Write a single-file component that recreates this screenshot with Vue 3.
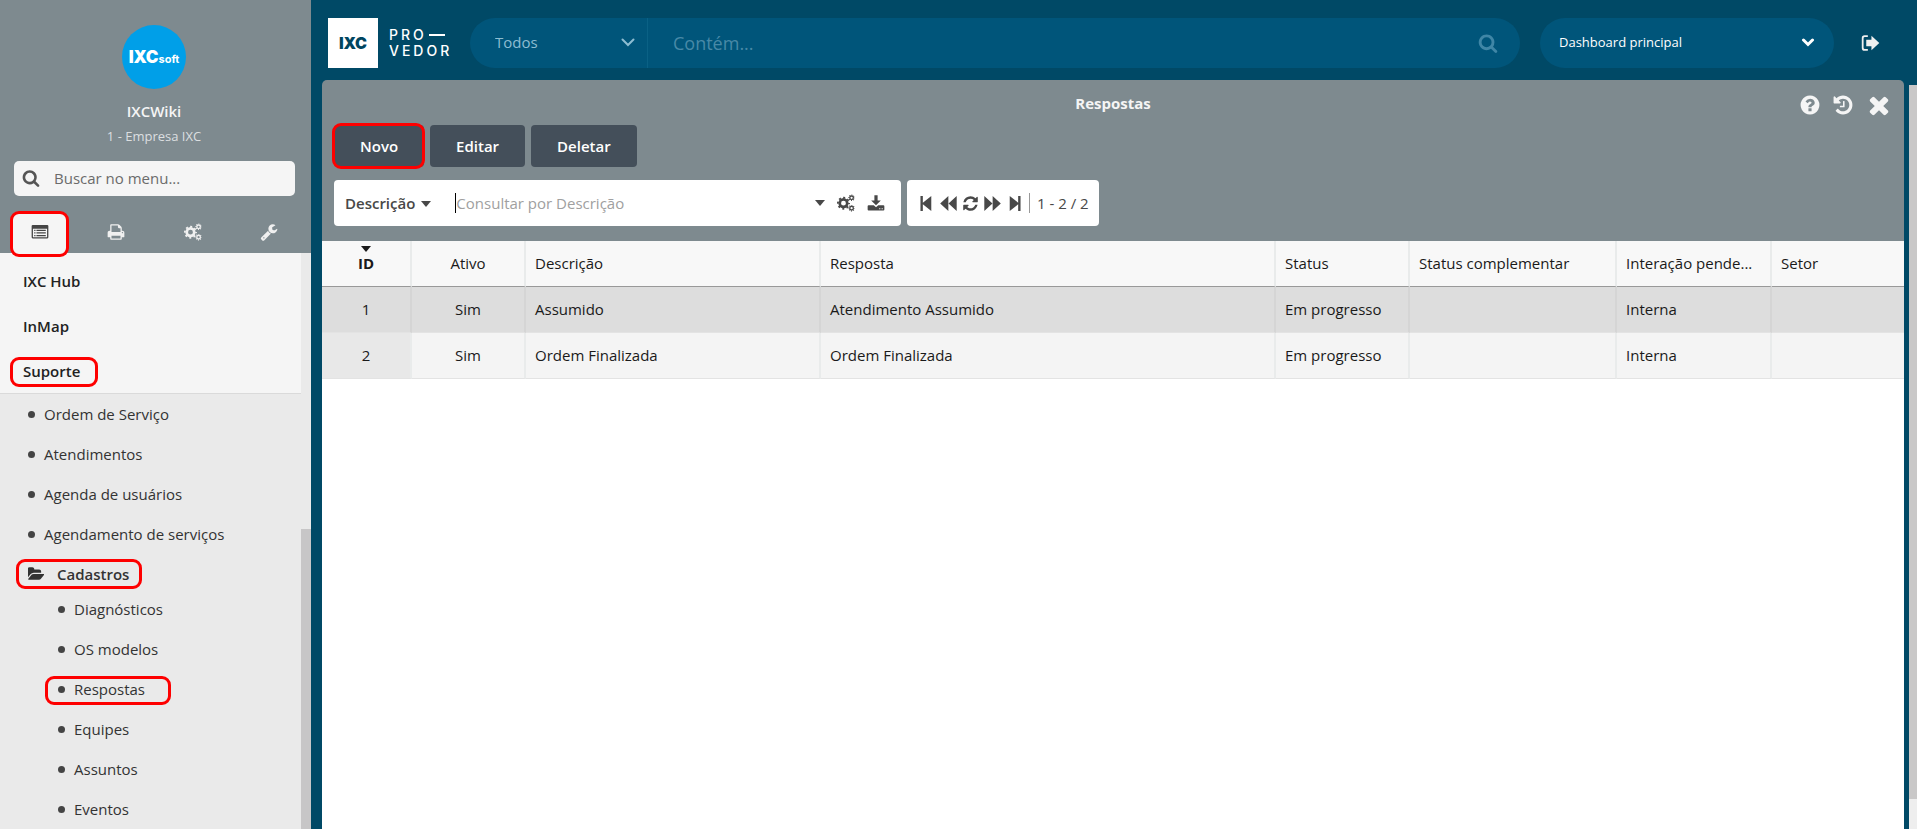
<script setup>
import { h, ref } from 'vue'

const columns = [
  { label: 'ID', cls: 'w-id' },
  { label: 'Ativo', cls: 'w-ativo' },
  { label: 'Descrição', cls: 'w-desc' },
  { label: 'Resposta', cls: 'w-resp' },
  { label: 'Status', cls: 'w-status' },
  { label: 'Status complementar', cls: 'w-compl' },
  { label: 'Interação pende...', cls: 'w-inter' },
  { label: 'Setor', cls: 'w-setor' },
]
const rows = [
  ['1', 'Sim', 'Assumido', 'Atendimento Assumido', 'Em progresso', '', 'Interna', ''],
  ['2', 'Sim', 'Ordem Finalizada', 'Ordem Finalizada', 'Em progresso', '', 'Interna', ''],
]
const selected = ref(0)
const modules = ['IXC Hub', 'InMap', 'Suporte']
const links = ['Ordem de Serviço', 'Atendimentos', 'Agenda de usuários', 'Agendamento de serviços']
const subLinks = ['Diagnósticos', 'OS modelos', 'Respostas', 'Equipes', 'Assuntos', 'Eventos']

const paths = {
  search: 'M1216 832q0-185-131.5-316.5t-316.5-131.5-316.5 131.5-131.5 316.5 131.5 316.5 316.5 131.5 316.5-131.5 131.5-316.5zm512 832q0 52-38 90t-90 38q-54 0-90-38l-343-342q-179 124-399 124-143 0-273.5-55.5t-225-150-150-225-55.5-273.5 55.5-273.5 150-225 225-150 273.5-55.5 273.5 55.5 225 150 150 225 55.5 273.5q0 220-124 399l343 343q37 37 37 90z',
  list: 'M176 192H1616q112 0 112 112V1424q0 112-112 112H176q-112 0-112-112V304q0-112 112-112zM192 576V1392q0 16 16 16H1584q16 0 16-16V576zM320 672h128v128H320zM544 672h928v128H544zM320 928h128v128H320zM544 928h928v128H544zM320 1184h128v128H320zM544 1184h928v128H544z',
  print: 'M448 1536h896v-256h-896v256zm0-640h896v-384h-160q-40 0-68-28t-28-68v-160h-640v640zm1152 64q0-26-19-45t-45-19-45 19-19 45 19 45 45 19 45-19 19-45zm128 0v416q0 13-9.5 22.5t-22.5 9.5h-224v160q0 40-28 68t-68 28h-960q-40 0-68-28t-28-68v-160h-224q-13 0-22.5-9.5t-9.5-22.5v-416q0-79 56.5-135.5t135.5-56.5h64v-544q0-40 28-68t68-28h672q40 0 88 20t76 48l152 152q28 28 48 76t20 88v256h64q79 0 135.5 56.5t56.5 135.5z',
  wrench: 'M448 1472q0-26-19-45t-45-19-45 19-19 45 19 45 45 19 45-19 19-45zm644-420l-682 682q-37 37-90 37-52 0-91-37l-106-108q-38-36-38-90 0-53 38-91l681-681q39 98 114.5 173.5t173.5 114.5zm634-435q0 39-23 106-47 134-164.5 217.5t-258.5 83.5q-185 0-316.5-131.5t-131.5-316.5 131.5-316.5 316.5-131.5q58 0 121.5 16.5t107.5 46.5q16 11 16 28t-16 28l-293 169v224l193 107q5-3 79-48.5t135.5-81 70.5-35.5q15 0 23.5 10t8.500 25z',
  folder: 'M1815 952q0 31-31 66l-336 396q-43 51-120.5 86.5t-143.5 35.5h-1088q-34 0-60.5-13t-26.5-43q0-31 31-66l336-396q43-51 120.5-86.5t143.5-35.5h1088q34 0 60.5 13t26.5 43zm-343-344v160h-832q-94 0-197 47.5t-164 119.5l-337 396-5 6q0-4-.5-12.5t-.5-12.5v-960q0-92 66-158t158-66h320q92 0 158 66t66 158v32h544q92 0 158 66t66 158z',
  refresh: 'M1639 1056q0 5-1 7-64 268-268 434.5t-478 166.5q-146 0-282.5-55t-243.5-157l-129 129q-19 19-45 19t-45-19-19-45v-448q0-26 19-45t45-19h448q26 0 45 19t19 45-19 45l-137 137q71 66 161 102t187 36q134 0 250-65t186-179q11-17 53-117 8-23 30-23h192q13 0 22.5 9.5t9.5 22.5zm25-800v448q0 26-19 45t-45 19h-448q-26 0-45-19t-19-45 19-45l138-138q-148-137-349-137-134 0-250 65t-186 179q-11 17-53 117-8 23-30 23h-199q-13 0-22.5-9.5t-9.5-22.5v-7q65-268 270-434.5t480-166.5q146 0 284 55.5t245 156.5l130-129q19-19 45-19t45 19 19 45z',
  times: 'M1490 1322q0 40-28 68l-136 136q-28 28-68 28t-68-28l-294-294-294 294q-28 28-68 28t-68-28l-136-136q-28-28-28-68t28-68l294-294-294-294q-28-28-28-68t28-68l136-136q28-28 68-28t68 28l294 294 294-294q28-28 68-28t68 28l136 136q28 28 28 68t-28 68l-294 294 294 294q28 28 28 68z',
  help: 'M1024 1376v-192q0-14-9-23t-23-9h-192q-14 0-23 9t-9 23v192q0 14 9 23t23 9h192q14 0 23-9t9-23zm256-672q0-88-55.5-163t-138.5-116-170-41q-243 0-371 213-15 24 8 42l132 100q7 6 19 6 16 0 25-12 53-68 86-92 34-24 86-24 48 0 85.5 26t37.5 59q0 38-20 61t-68 45q-63 28-115.5 86.5t-52.5 125.5v36q0 14 9 23t23 9h192q14 0 23-9t9-23q0-19 21.5-49.5t54.5-49.5q32-18 49-28.5t46-35 44.5-48 28-60.5 12.5-81zm384 192q0 209-103 385.5t-279.5 279.5-385.5 103-385.5-103-279.5-279.5-103-385.5 103-385.5 279.5-279.5 385.5-103 385.5 103 279.5 279.5 103 385.5z',
  history: 'M1664 896q0 156-61 298t-164 245-245 164-298 61q-172 0-327-72.5t-264-204.5q-7-10-6.5-22.5t8.5-20.5l137-138q10-9 25-9 16 2 23 12 73 95 179 147t225 52q104 0 198.5-40.5t163.5-109.5 109.5-163.5 40.5-198.5-40.5-198.5-109.5-163.5-163.5-109.5-198.5-40.5q-98 0-188 35.5t-160 101.5l137 138q31 30 14 69-17 40-59 40h-448q-26 0-45-19t-19-45v-448q0-42 40-59 39-17 69 14l130 129q107-101 244.5-156.5t284.5-55.5q156 0 298 61t245 164 164 245 61 298zm-640-288v448q0 14-9 23t-23 9h-320q-14 0-23-9t-9-23v-64q0-14 9-23t23-9h224v-352q0-14 9-23t23-9h64q14 0 23 9t9 23z',
  download: 'M736 128h320v512h320L896 1120 416 640h320zM160 1120h512l224 208 224-208h512q96 0 96 96v320q0 96-96 96H160q-96 0-96-96V1216q0-96 96-96zM1216 1408v112h112v-112zM1456 1408v112h112v-112z',
  first: 'M260 96h250v720L1400 96v1600L510 976v720H260z',
  prev: 'M880 96v1600L20 896zM1760 96v1600L900 896z',
  next: 'M32 96v1600L892 896zM912 96v1600L1772 896z',
  last: 'M1532 96h-250v720L392 96v1600l890-720v720h250z',
  exit: 'M704 192v160H448q-128 0-128 128v832q0 128 128 128h256v160H416q-256 0-256-256V448q0-256 256-256zM1024 256l704 640-704 640V1184H560V608H1024z',
}

// Gears are rings with a dashed outer ring forming the teeth.
function gear(cx, cy, r, w, toothR, toothW) {
  const step = (2 * Math.PI * toothR) / 8
  const base = { cx, cy, fill: 'none', stroke: 'currentColor' }
  return [
    h('circle', { ...base, r, 'stroke-width': w }),
    h('circle', { ...base, r: toothR, 'stroke-width': toothW, 'stroke-dasharray': `${step * 0.46} ${step * 0.54}`, 'stroke-dashoffset': step * 0.23 }),
  ]
}

const Icon = ({ name }) => {
  const attrs = { class: 'icon', 'aria-hidden': 'true', fill: 'currentColor' }
  if (name === 'cogs') {
    return h('svg', { ...attrs, viewBox: '0 0 20 20' }, [
      ...gear(7.2, 10.2, 4.2, 3, 6.2, 2),
      ...gear(16.2, 4.2, 2, 1.5, 3, 1.2),
      ...gear(16.2, 15.8, 2, 1.5, 3, 1.2),
    ])
  }
  return h('svg', { ...attrs, viewBox: '0 0 1792 1792' }, [h('path', { d: paths[name], 'fill-rule': 'evenodd' })])
}
Icon.props = ['name']
</script>

<template>
  <div class="app">
    <aside class="sidebar">
      <div class="profile">
        <div class="avatar"><b>IXC</b><span>soft</span></div>
        <div class="user">IXCWiki</div>
        <div class="company">1 - Empresa IXC</div>
        <label class="menu-search">
          <Icon name="search" />
          <input type="text" placeholder="Buscar no menu..." aria-label="Buscar no menu" />
        </label>
        <nav class="tabs">
          <button class="tab active ring" aria-label="Menu"><Icon name="list" /></button>
          <button class="tab" aria-label="Imprimir"><Icon name="print" /></button>
          <button class="tab" aria-label="Configurações"><Icon name="cogs" /></button>
          <button class="tab" aria-label="Ferramentas"><Icon name="wrench" /></button>
        </nav>
      </div>
      <div class="menu">
        <nav class="menu-list">
          <div class="modules">
            <a v-for="m in modules" :key="m" href="#" class="module"><span :class="{ ring: m === 'Suporte', suporte: m === 'Suporte' }">{{ m }}</span></a>
          </div>
          <div class="links">
            <a v-for="l in links" :key="l" href="#" class="link"><i class="dot"></i>{{ l }}</a>
            <a href="#" class="folder"><span class="ring cadastros"><Icon name="folder" />Cadastros</span></a>
            <a v-for="l in subLinks" :key="l" href="#" class="link sub"><span :class="{ ring: l === 'Respostas', respostas: l === 'Respostas' }"><i class="dot"></i>{{ l }}</span></a>
          </div>
        </nav>
        <div class="menu-scroll"><div class="menu-thumb"></div></div>
      </div>
    </aside>

    <div class="content">
      <header class="topbar">
        <div class="brand">
          <div class="brand-box">IXC</div>
          <div class="brand-name"><span>PRO<i></i></span><span>VEDOR</span></div>
        </div>
        <div class="global-search">
          <div class="scope">
            <select aria-label="Escopo"><option>Todos</option></select>
            <svg class="chevron" viewBox="0 0 14 9" aria-hidden="true"><path d="M1.5 1.5 7 7l5.500-5.500" /></svg>
          </div>
          <input type="text" placeholder="Contém..." aria-label="Contém" />
          <button class="search-btn" aria-label="Pesquisar"><Icon name="search" /></button>
        </div>
        <div class="dashboard">
          <select aria-label="Dashboard"><option>Dashboard principal</option></select>
          <svg class="chevron bold" viewBox="0 0 14 9" aria-hidden="true"><path d="M2.500 2 7 6.500l4.500-4.500" /></svg>
        </div>
        <button class="logout" aria-label="Sair"><Icon name="exit" /></button>
      </header>

      <div class="stage">
        <main class="window">
          <div class="title-row">
            <h1>Respostas</h1>
            <div class="window-actions">
              <button aria-label="Ajuda"><Icon name="help" /></button>
              <button aria-label="Histórico"><Icon name="history" /></button>
              <button class="close" aria-label="Fechar"><Icon name="times" /></button>
            </div>
          </div>
          <div class="buttons">
            <button class="btn ring">Novo</button>
            <button class="btn">Editar</button>
            <button class="btn">Deletar</button>
          </div>
          <div class="filters">
            <div class="filter">
              <button class="field">Descrição<i class="caret"></i></button>
              <div class="query">
                <i class="cursor"></i>
                <input type="text" placeholder="Consultar por Descrição" aria-label="Consultar por Descrição" />
              </div>
              <button class="tool" aria-label="Opções"><i class="caret"></i></button>
              <button class="tool" aria-label="Configurar"><Icon name="cogs" /></button>
              <button class="tool" aria-label="Baixar"><Icon name="download" /></button>
            </div>
            <div class="pager">
              <button aria-label="Primeira"><Icon name="first" /></button>
              <button aria-label="Anterior"><Icon name="prev" /></button>
              <button aria-label="Atualizar"><Icon name="refresh" /></button>
              <button aria-label="Próxima"><Icon name="next" /></button>
              <button aria-label="Última"><Icon name="last" /></button>
              <span class="count">1 - 2 / 2</span>
            </div>
          </div>
          <div class="grid">
            <table>
              <thead>
                <tr>
                  <th v-for="(c, i) in columns" :key="c.label" :class="c.cls" scope="col"><i v-if="i === 0" class="caret sort"></i>{{ c.label }}</th>
                </tr>
              </thead>
              <tbody>
                <tr v-for="(r, i) in rows" :key="i" :class="{ selected: i === selected }" @click="selected = i">
                  <td v-for="(v, j) in r" :key="j">{{ v }}</td>
                </tr>
              </tbody>
            </table>
          </div>
        </main>
        <div class="page-scroll"><div class="page-thumb"></div></div>
      </div>
    </div>
  </div>
</template>

<style>
body {
  background: #004966;
  overflow: hidden;
}
</style>

<style scoped>
.app {
  display: grid;
  grid-template-columns: 311px minmax(0, 1fr);
  height: 100vh;
  font-family: "Open Sans", "Noto Sans", sans-serif;
  font-size: 15px;
  line-height: 20px;
  color: #222;
}
.app * {
  box-sizing: border-box;
}
button,
input,
select {
  font: inherit;
  color: inherit;
  background: none;
  border: 0;
  padding: 0;
  margin: 0;
  outline: 0;
  appearance: none;
}
a {
  color: inherit;
  text-decoration: none;
}
:deep(.icon),
.icon {
  display: block;
  width: 18px;
  height: 18px;
  flex: none;
}
.ring {
  position: relative;
}
.ring::after {
  content: "";
  position: absolute;
  inset: -2px;
  border: 3px solid #fe0000;
  border-radius: 9px;
  pointer-events: none;
  z-index: 1;
}
.caret {
  display: inline-block;
  border: 5px solid transparent;
  border-top: 6px solid currentColor;
  border-bottom: 0;
}

.sidebar {
  display: flex;
  flex-direction: column;
  min-height: 0;
}
.profile {
  display: flex;
  flex-direction: column;
  align-items: center;
  background: #7e8a8f;
  padding: 25px 3px 0 0;
}
.avatar {
  display: flex;
  align-items: baseline;
  justify-content: center;
  width: 64px;
  height: 64px;
  border-radius: 50%;
  background: #009fe8;
  color: #fff;
  font-family: Inter, sans-serif;
  line-height: 64px;
}
.avatar b {
  font-size: 17px;
  font-weight: 900;
}
.avatar span {
  font-size: 11px;
  font-weight: 700;
}
.user {
  margin-top: 12px;
  color: #f5f5f5;
  font-weight: 600;
}
.company {
  margin-top: 5px;
  font-size: 13px;
  color: #dcdfe0;
}
.menu-search {
  display: flex;
  align-items: center;
  align-self: stretch;
  height: 35px;
  margin: 15px 13px 0 14px;
  padding: 0 8px 2px;
  gap: 14px;
  border-radius: 5px;
  background: #f5f5f5;
  color: #555;
}
.menu-search input {
  flex: 1;
  min-width: 0;
}
.menu-search input::placeholder {
  color: #6b6b6b;
  opacity: 1;
}
.tabs {
  display: flex;
  justify-content: space-between;
  align-self: stretch;
  padding: 17px 11px 0 12px;
}
.tab {
  display: flex;
  align-items: center;
  justify-content: center;
  width: 55px;
  height: 40px;
  padding-bottom: 2px;
  color: #f0f0f0;
}
.tab.active {
  background: #f5f5f5;
  color: #444;
  border-radius: 5px 5px 0 0;
}
.tab.active::after {
  bottom: -4px;
}
.menu {
  display: flex;
  flex: 1;
  min-height: 0;
  background: #eaeaea;
}
.menu-list {
  flex: 1;
  overflow: hidden;
}
.modules {
  background: #f5f5f5;
  border-bottom: 1px solid #dadada;
  padding-top: 5px;
  font-weight: 600;
}
.module {
  display: flex;
  align-items: center;
  height: 45px;
  padding-left: 23px;
}
.suporte::after {
  inset: -4px -18px -6px -13px;
}
.link,
.folder {
  display: flex;
  align-items: center;
  height: 40px;
  padding-left: 28px;
  color: #333;
}
.link span {
  display: flex;
  align-items: center;
}
.dot {
  width: 7px;
  height: 7px;
  margin-right: 9px;
  border-radius: 50%;
  background: #444;
}
.sub {
  padding-left: 58px;
}
.folder {
  height: 35px;
  margin-top: 2px;
  margin-bottom: -2px;
  font-weight: 600;
}
.folder span {
  display: flex;
  align-items: center;
  gap: 13px;
}
.folder :deep(.icon) {
  width: 16px;
  height: 16px;
}
.cadastros::after {
  inset: -5px -13px -5px -12px;
}
.respostas::after {
  inset: -3px -26px -6px -13px;
}
.menu-scroll {
  display: flex;
  align-items: flex-end;
  width: 10px;
  background: #eaeaea;
}
.menu-thumb {
  width: 100%;
  height: 52%;
  background: #c7c6c7;
}

.content {
  display: flex;
  flex-direction: column;
  min-width: 0;
}
.topbar {
  display: flex;
  align-items: center;
  height: 80px;
  padding: 6px 37px 0 17px;
}
.brand {
  display: flex;
  align-items: center;
  gap: 11px;
  width: 142px;
  height: 50px;
  color: #fff;
  font-family: Inter, sans-serif;
}
.brand-box {
  width: 50px;
  height: 50px;
  background: #fff;
  color: #00455f;
  font-size: 16px;
  font-weight: 900;
  line-height: 50px;
  text-align: center;
}
.brand-name {
  display: grid;
  font-size: 14px;
  font-weight: 500;
  line-height: 16px;
  letter-spacing: 3px;
}
.brand-name i {
  display: inline-block;
  width: 16px;
  height: 2px;
  margin: 0 0 4px 2px;
  background: #fff;
}
.global-search {
  display: flex;
  align-items: center;
  flex: 1;
  min-width: 0;
  height: 50px;
  border-radius: 25px;
  background: #00557a;
}
.scope {
  display: flex;
  align-items: center;
  width: 178px;
  height: 100%;
  padding: 0 12px 2px 25px;
  border-right: 1px solid #0a6185;
  color: #8dbdd2;
}
.scope select,
.dashboard select {
  flex: 1;
  min-width: 0;
}
.chevron {
  width: 14px;
  height: 9px;
  fill: none;
  stroke: currentColor;
  stroke-width: 2;
  stroke-linecap: round;
}
.chevron.bold {
  stroke-width: 3;
}
.global-search input {
  flex: 1;
  min-width: 0;
  padding-left: 25px;
  font-size: 18px;
  line-height: 24px;
}
.global-search input::placeholder {
  color: #4889a7;
  opacity: 1;
}
.search-btn {
  padding-right: 22px;
  color: #3f86a6;
}
.search-btn :deep(.icon) {
  width: 20px;
  height: 20px;
}
.dashboard {
  display: flex;
  align-items: center;
  width: 294px;
  height: 50px;
  margin-left: 20px;
  padding: 0 19px 2px 19px;
  border-radius: 25px;
  background: #00557a;
  color: #fff;
  font-size: 13px;
}
.logout {
  margin-left: 26px;
  color: #f0f0f0;
}
.logout :deep(.icon) {
  width: 20px;
  height: 20px;
}

.stage {
  display: flex;
  flex: 1;
  min-height: 0;
  padding-left: 11px;
}
.window {
  display: flex;
  flex-direction: column;
  flex: 1;
  min-width: 0;
  border-radius: 5px 5px 0 0;
  background: #7e8a8f;
}
.title-row {
  position: relative;
  height: 45px;
  text-align: center;
  color: #f5f5f5;
}
h1 {
  margin: 0;
  padding-top: 13px;
  font-size: 15px;
  font-weight: 700;
  line-height: 20px;
}
.window-actions {
  position: absolute;
  top: 11px;
  right: 11px;
  display: flex;
  align-items: center;
  gap: 11px;
}
.window-actions :deep(.icon) {
  width: 22px;
  height: 22px;
}
.window-actions .close :deep(.icon) {
  width: 28px;
  height: 28px;
}
.buttons {
  display: flex;
  gap: 6px;
  padding-left: 12px;
}
.btn {
  height: 42px;
  padding: 0 26px;
  border-radius: 4px;
  background: #444f5a;
  color: #fff;
  font-weight: 600;
}
.btn.ring::after {
  right: -1px;
}
.filters {
  display: flex;
  gap: 6px;
  padding: 13px 12px 15px;
  color: #484848;
}
.filter,
.pager {
  display: flex;
  align-items: center;
  height: 46px;
  border-radius: 4px;
  background: #fff;
}
.filter {
  width: 567px;
  padding: 0 16px 0 11px;
  gap: 12px;
}
.field {
  font-weight: 600;
}
.field .caret {
  margin: 0 0 2px 6px;
}
.query {
  display: flex;
  align-items: center;
  flex: 1;
  min-width: 0;
  margin-left: 12px;
}
.query input {
  flex: 1;
  min-width: 0;
}
.query input::placeholder {
  color: #a0a0a0;
  opacity: 1;
}
.cursor {
  width: 1px;
  height: 20px;
  background: #000;
}
.tool .caret {
  display: block;
}
.pager {
  width: 192px;
  padding: 0 10px 0 11px;
  gap: 6px;
}
.pager button {
  width: 16px;
  height: 20px;
}
.pager button :deep(.icon) {
  width: 17px;
  height: 17px;
}
.count {
  margin-left: 1px;
  padding-left: 7px;
  border-left: 1px solid #999;
  white-space: nowrap;
}
.grid {
  flex: 1;
  background: #fff;
}
table {
  width: 100%;
  table-layout: fixed;
  border-collapse: separate;
  border-spacing: 0;
  color: #1a1a1a;
}
th,
td {
  height: 46px;
  padding: 0 0 2px 9px;
  border-right: 2px solid #e9ebeb;
  border-bottom: 1px solid #e3e3e3;
  background: #f4f4f4;
  text-align: left;
  font-weight: 400;
  overflow: hidden;
  white-space: nowrap;
  text-overflow: ellipsis;
}
th {
  position: relative;
  background: #f8f8f8;
  border-bottom-color: #999;
}
th:last-child,
td:last-child {
  border-right: 0;
}
th:nth-child(-n + 2),
td:nth-child(-n + 2) {
  padding-left: 0;
  text-align: center;
}
th:first-child {
  font-weight: 700;
}
td:first-child {
  background: #e8e8e8;
}
.selected td {
  background: #dddddd;
  border-right-color: #d5d5d5;
}
.sort {
  position: absolute;
  top: 5px;
  left: 50%;
  margin-left: -5px;
}
.w-id { width: 90px; }
.w-ativo { width: 114px; }
.w-desc { width: 295px; }
.w-status { width: 134px; }
.w-compl { width: 207px; }
.w-inter { width: 155px; }
.w-setor { width: 132px; }
.page-scroll {
  width: 8px;
  margin: 5px 0 0 5px;
  background: #eeeeee;
}
.page-thumb {
  height: 96%;
  background: #c9c8c8;
}
</style>
